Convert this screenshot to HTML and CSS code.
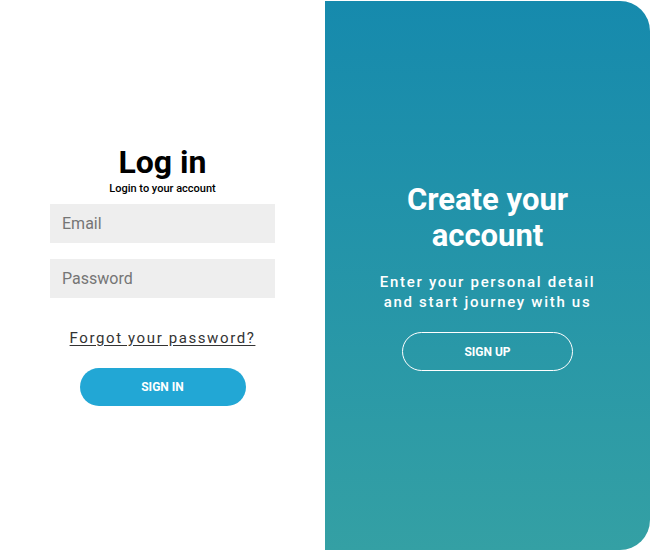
FILE: index.html
```html
<!DOCTYPE html>
<html>
<head>
<meta charset="utf-8">
<link rel="stylesheet" href="styles.css">
</head>
<body>
<div class="container">
  <section class="login">
    <form class="login-form" onsubmit="return false">
      <h1 class="title">Log in</h1>
      <p class="subtitle">Login to your account</p>
      <input class="field" type="email" placeholder="Email">
      <input class="field" type="password" placeholder="Password">
      <a class="forgot" href="#">Forgot your password?</a>
      <button class="btn btn-primary" type="submit">SIGN IN</button>
    </form>
  </section>
  <section class="overlay">
    <h2 class="overlay-title">Create your<br>account</h2>
    <p class="overlay-text">Enter your personal detail<br>and start journey with us</p>
    <button class="btn btn-ghost" type="button">SIGN UP</button>
  </section>
</div>
</body>
</html>
```
FILE: styles.css
```css
* { box-sizing: border-box; }
html, body { margin: 0; padding: 0; background: #fff; }
body { font-family: Roboto, "Liberation Sans", sans-serif; }

.container {
  display: flex;
  width: 650px;
  height: 549px;
  margin-top: 1px;
}

.login {
  width: 325px;
  display: flex;
  align-items: center;
  justify-content: center;
}

.login-form {
  width: 225px;
  display: flex;
  flex-direction: column;
  align-items: center;
}

.title {
  margin: 0;
  font-size: 32px;
  font-weight: 700;
  line-height: 32px;
  color: #000;
}

.subtitle {
  margin: 4px 0 8px;
  font-size: 11px;
  font-weight: 500;
  line-height: 14px;
  color: #000;
}

.field {
  width: 225px;
  height: 39px;
  border: 0;
  outline: none;
  background: #eeeeee;
  padding: 0 12px;
  font-family: inherit;
  font-size: 16px;
  color: #333;
  margin-bottom: 16px;
}
.field::placeholder { color: #757575; }

.forgot {
  margin-top: 14px;
  font-size: 15px;
  letter-spacing: 1.6px;
  color: #333;
  text-decoration: underline;
  text-underline-offset: 2px;
  line-height: 20px;
}

.btn {
  font-family: inherit;
  font-size: 12px;
  font-weight: 700;
  color: #fff;
  border-radius: 20px;
  cursor: pointer;
}

.btn-primary {
  margin-top: 20px;
  width: 166px;
  height: 38px;
  border: 0;
  background: #22a7d5;
}

.overlay {
  width: 325px;
  background: linear-gradient(to bottom, #168aad, #34a0a4);
  border-radius: 0 30px 30px 0;
  display: flex;
  flex-direction: column;
  align-items: center;
  justify-content: center;
  color: #fff;
  text-align: center;
  padding-top: 2px;
}

.overlay-title {
  margin: 0;
  font-size: 31px;
  font-weight: 700;
  line-height: 36px;
}

.overlay-text {
  margin: 18px 0 20px;
  font-size: 15px;
  font-weight: 500;
  letter-spacing: 1.7px;
  line-height: 20px;
}

.btn-ghost {
  width: 171px;
  height: 39px;
  background: transparent;
  border: 1px solid #fff;
}
```
